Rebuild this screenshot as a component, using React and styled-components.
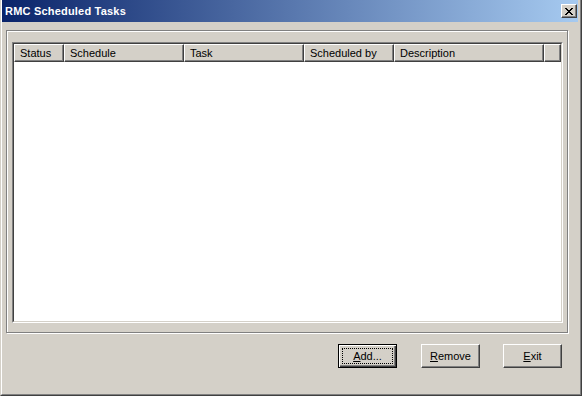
import React from "react";
import styled, { createGlobalStyle } from "styled-components";

const Global = createGlobalStyle`
  html, body { margin: 0; padding: 0; background: #D4D0C8; }
  body { font-family: "Liberation Sans", Arial, sans-serif; font-size: 11px; color: #000; }
  * { box-sizing: border-box; }
`;

const Window = styled.div`
  width: 582px;
  height: 396px;
  background: #d4d0c8;
  border-left: 1px solid #d4d0c8;
  border-right: 1px solid #404040;
  border-bottom: 1px solid #404040;
  display: flex;
  flex-direction: column;
`;

const WindowInner = styled.div`
  flex: 1;
  display: flex;
  flex-direction: column;
  border-left: 1px solid #ffffff;
  border-right: 1px solid #808080;
  border-bottom: 1px solid #808080;
  padding-right: 2px;
`;

const TitleBar = styled.div`
  height: 22px;
  display: flex;
  align-items: flex-start;
  justify-content: space-between;
  background: linear-gradient(to right, #0a246a, #a6caf0);
`;

const TitleText = styled.div`
  color: #fff;
  font-weight: bold;
  font-size: 11px;
  letter-spacing: 0.2px;
  line-height: 22px;
  padding-left: 3px;
  white-space: nowrap;
`;

const CloseButton = styled.div`
  width: 16px;
  height: 14px;
  margin-top: 4px;
  margin-right: 1px;
  background: #d4d0c8;
  border-top: 1px solid #fff;
  border-left: 1px solid #fff;
  border-right: 1px solid #404040;
  border-bottom: 1px solid #404040;
  box-shadow: inset -1px -1px 0 #808080;
  display: flex;
  align-items: center;
  justify-content: center;
`;

const Body = styled.div`
  flex: 1;
  display: flex;
  flex-direction: column;
  padding: 8px 0 0 4px;
`;

const Frame = styled.div`
  width: 562px;
  height: 303px;
  border: 1px solid #808080;
  box-shadow: inset 1px 1px 0 #fff, 1px 1px 0 #fff;
  padding: 11px 4px 9px 5px;
  display: flex;
`;

const ListOuter = styled.div`
  flex: 1;
  display: flex;
  border-top: 1px solid #808080;
  border-left: 1px solid #808080;
  border-right: 1px solid #fff;
  border-bottom: 1px solid #fff;
`;

const ListInner = styled.div`
  flex: 1;
  display: flex;
  flex-direction: column;
  background: #fff;
  border-top: 1px solid #404040;
  border-left: 1px solid #404040;
  border-right: 1px solid #d4d0c8;
  border-bottom: 1px solid #d4d0c8;
`;

const HeaderRow = styled.div`
  display: flex;
  height: 18px;
  background: #d4d0c8;
`;

const HeaderCell = styled.div`
  flex: ${(p) => (p.$w ? `0 0 ${p.$w}px` : "1 1 auto")};
  height: 18px;
  border-top: 1px solid #fff;
  border-left: 1px solid #fff;
  border-right: 1px solid #404040;
  border-bottom: 1px solid #404040;
  box-shadow: inset -1px -1px 0 #808080;
  padding-left: 5px;
  font-size: 11px;
  line-height: 16px;
  white-space: nowrap;
  overflow: hidden;
`;

const ButtonRow = styled.div`
  display: flex;
  justify-content: flex-end;
  gap: 23px;
  margin-top: 11px;
  padding-right: 16px;
`;

const Button = styled.div`
  width: 59px;
  height: 24px;
  background: #d4d0c8;
  display: flex;
  align-items: center;
  justify-content: center;
  font-size: 11px;
  border-top: 1px solid #fff;
  border-left: 1px solid #fff;
  border-right: 1px solid #404040;
  border-bottom: 1px solid #404040;
  box-shadow: inset -1px -1px 0 #808080;
`;

const DefaultButton = styled(Button)`
  width: 59px;
  margin-right: 1px;
  border: 1px solid #000;
  box-shadow: inset 1px 1px 0 #fff, inset -1px -1px 0 #404040, inset -2px -2px 0 #808080;
  padding: 3px;
`;

const FocusRect = styled.div`
  flex: 1;
  align-self: stretch;
  border: 1px dotted #000;
  display: flex;
  align-items: center;
  justify-content: center;
`;

const columns = [
  { label: "Status", w: 50 },
  { label: "Schedule", w: 120 },
  { label: "Task", w: 120 },
  { label: "Scheduled by", w: 90 },
  { label: "Description", w: 150 },
  { label: "", w: 0 },
];

export default function App() {
  return (
    <>
      <Global />
      <Window>
        <WindowInner>
          <TitleBar>
            <TitleText>RMC Scheduled Tasks</TitleText>
            <CloseButton>
              <svg width="8" height="7" viewBox="0 0 8 7" shapeRendering="crispEdges">
                <path
                  d="M0 0h2v1h-2zM6 0h2v1h-2zM1 1h2v1h-2zM5 1h2v1h-2zM2 2h4v1h-4zM3 3h2v1h-2zM2 4h4v1h-4zM1 5h2v1h-2zM5 5h2v1h-2zM0 6h2v1h-2zM6 6h2v1h-2z"
                  fill="#000"
                />
              </svg>
            </CloseButton>
          </TitleBar>
          <Body>
            <Frame>
              <ListOuter>
                <ListInner>
                  <HeaderRow>
                    {columns.map((c, i) => (
                      <HeaderCell key={i} $w={c.w}>
                        {c.label}
                      </HeaderCell>
                    ))}
                  </HeaderRow>
                </ListInner>
              </ListOuter>
            </Frame>
            <ButtonRow>
              <DefaultButton>
                <FocusRect>
                  <span>
                    <u>A</u>dd...
                  </span>
                </FocusRect>
              </DefaultButton>
              <Button>
                <span>
                  <u>R</u>emove
                </span>
              </Button>
              <Button>
                <span>
                  <u>E</u>xit
                </span>
              </Button>
            </ButtonRow>
          </Body>
        </WindowInner>
      </Window>
    </>
  );
}
